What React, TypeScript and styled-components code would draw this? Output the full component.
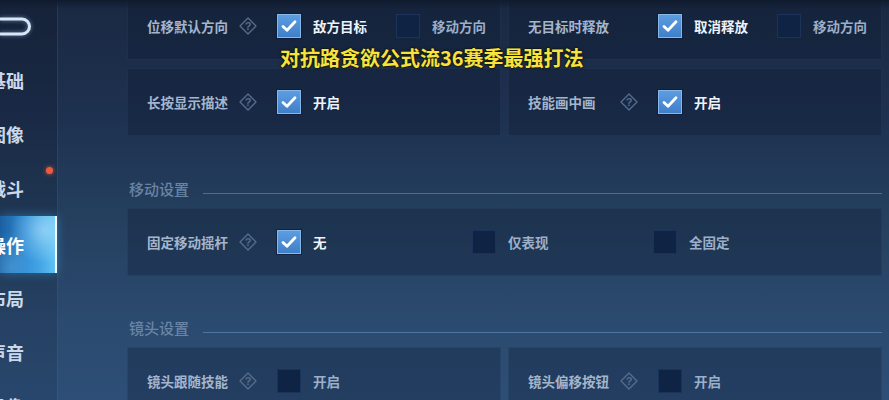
import styled, { createGlobalStyle, css } from "styled-components";

const GlobalStyle = createGlobalStyle`
     * {
          box-sizing: border-box;
     }
     body {
          margin: 0;
          background: #1b2a43;
          font-family: "Noto Sans CJK SC", "Noto Sans", sans-serif;
     }
`;

const StyledScreen = styled.div`
     position: relative;
     width: 889px;
     height: 400px;
     display: flex;
     overflow: hidden;
     background: linear-gradient(
          180deg,
          #1a2942 0%,
          #1e3150 30%,
          #25405f 55%,
          #2b4a6f 80%,
          #2d4e76 100%
     );
`;

const StyledTopShade = styled.div`
     position: absolute;
     top: 0;
     left: 0;
     right: 0;
     height: 9px;
     background: linear-gradient(180deg, #0f1b2e 0%, rgba(18, 30, 50, 0) 100%);
     pointer-events: none;
`;

const StyledSidebar = styled.nav`
     width: 58px;
     flex-shrink: 0;
     display: flex;
     flex-direction: column;
     border-right: 1px solid rgba(110, 150, 200, 0.2);
     background: linear-gradient(180deg, rgba(12, 22, 38, 0.35), rgba(20, 40, 70, 0.2));
`;

const StyledBack = styled.div`
     height: 53px;
     flex-shrink: 0;
     display: flex;
     align-items: center;
     svg {
          filter: drop-shadow(0 0 2px rgba(150, 200, 255, 0.6));
     }
`;

interface NavProps {
     active?: boolean;
}

const StyledNavItem = styled.div<NavProps>`
     position: relative;
     height: 54px;
     flex-shrink: 0;
     display: flex;
     align-items: center;
     font-size: 18px;
     font-weight: 700;
     color: #cbd8ea;
     span {
          margin-left: -12px;
     }
     ${(props) =>
          props.active &&
          css`
               margin: 1px 0 -2px;
               height: 57px;
               color: #ffffff;
               background:
                    radial-gradient(ellipse at 80% 25%, rgba(190, 235, 255, 0.55), rgba(80, 180, 240, 0) 55%),
                    radial-gradient(ellipse at 20% 90%, rgba(120, 200, 250, 0.35), rgba(80, 180, 240, 0) 50%),
                    linear-gradient(90deg, #1c5fa0 0%, #2d8cd6 50%, #5fc2f4 100%);
               border-right: 2px solid #f2f8ff;
               box-shadow: 0 0 10px rgba(60, 170, 240, 0.45);
          `}
`;

const StyledRedDot = styled.span`
     position: absolute;
     top: 6px;
     right: 4px;
     width: 7px;
     height: 7px;
     border-radius: 50%;
     background: #ee5a3c;
     box-shadow: 0 0 4px rgba(255, 90, 60, 0.8);
`;

const StyledMain = styled.main`
     flex: 1;
     padding: 0 7px 0 69px;
     overflow: hidden;
`;

const StyledScroll = styled.div`
     margin-top: -8px;
`;

const StyledCardRow = styled.div`
     display: grid;
     grid-template-columns: minmax(0, 1fr) minmax(0, 1fr);
     gap: 7px;
     & + & {
          margin-top: 8px;
     }
`;

const StyledCard = styled.div`
     min-width: 0;
     height: 68px;
     display: flex;
     align-items: center;
     padding-left: 19px;
     background: rgba(10, 22, 44, 0.28);
     border: 1px solid rgba(120, 160, 210, 0.08);
     & > * {
          flex-shrink: 0;
     }
`;

const StyledLabel = styled.span`
     width: 92px;
     font-size: 13.5px;
     font-weight: 700;
     color: #a4b5cc;
     white-space: nowrap;
`;

const StyledHelp = styled.span<{ $hidden?: boolean }>`
     width: 18px;
     height: 18px;
     margin-right: 20px;
     display: flex;
     visibility: ${(props) => (props.$hidden ? "hidden" : "visible")};
`;

const StyledOption = styled.div<{ w: number }>`
     width: ${(props) => props.w}px;
     display: flex;
     align-items: center;
     gap: 12px;
`;

const StyledBox = styled.span<{ checked?: boolean }>`
     width: 24px;
     height: 24px;
     display: flex;
     align-items: center;
     justify-content: center;
     flex-shrink: 0;
     ${(props) =>
          props.checked
               ? css`
                      background: linear-gradient(180deg, #5c9de2 0%, #3f7fc8 100%);
                      border: 1px solid #86b8ec;
                      box-shadow: 0 0 0 1px rgba(10, 25, 50, 0.6);
                 `
               : css`
                      background: #0f2445;
                      border: 1px solid rgba(30, 55, 95, 0.8);
                 `}
`;

const StyledOptionText = styled.span<{ checked?: boolean }>`
     font-size: 13.5px;
     font-weight: 700;
     white-space: nowrap;
     color: ${(props) => (props.checked ? "#eef3fa" : "#9cafc8")};
`;

const StyledSectionHeader = styled.div<{ h: number }>`
     height: ${(props) => props.h}px;
     display: flex;
     align-items: flex-end;
     padding: 0 0 9px 2px;
`;

const StyledSectionTitle = styled.span`
     font-size: 15px;
     font-weight: 500;
     color: #6a84a5;
     line-height: 20px;
`;

const StyledSectionLine = styled.span`
     flex: 1;
     height: 1px;
     margin: 0 0 5px 14px;
     background: rgba(110, 160, 210, 0.5);
`;

const StyledBanner = styled.div`
     position: absolute;
     left: 280px;
     top: 46px;
     line-height: 24px;
     font-size: 20px;
     font-weight: 700;
     color: #f6e33e;
     white-space: nowrap;
     text-shadow:
          1px 1px 0 #1b1b10,
          -1px 0 0 rgba(20, 20, 10, 0.7),
          0 -1px 0 rgba(20, 20, 10, 0.6),
          0 0 3px rgba(0, 0, 0, 0.7);
`;

const HelpIcon = () => (
     <svg width="18" height="18" viewBox="0 0 18 18">
          <path
               d="M9 1 L17 9 L9 17 L1 9 Z"
               fill="none"
               stroke="#566d8d"
               strokeWidth="1.3"
               strokeLinejoin="round"
          />
          <text
               x="9"
               y="13"
               textAnchor="middle"
               fontSize="11"
               fontWeight="700"
               fill="#566d8d"
               fontFamily="Liberation Sans, sans-serif"
          >
               ?
          </text>
     </svg>
);

const CheckMark = () => (
     <svg width="16" height="14" viewBox="0 0 16 14">
          <path
               d="M2 7.5 L6 11.2 L14 2.8"
               fill="none"
               stroke="#ffffff"
               strokeWidth="2.8"
               strokeLinecap="round"
               strokeLinejoin="round"
          />
     </svg>
);

interface OptionProps {
     text: string;
     checked?: boolean;
     w?: number;
}

const Option = ({ text, checked, w = 119 }: OptionProps) => (
     <StyledOption w={w}>
          <StyledBox checked={checked}>{checked && <CheckMark />}</StyledBox>
          <StyledOptionText checked={checked}>{text}</StyledOptionText>
     </StyledOption>
);

interface SettingProps {
     label: string;
     help?: boolean;
     options: OptionProps[];
}

const Setting = ({ label, help = true, options }: SettingProps) => (
     <StyledCard>
          <StyledLabel>{label}</StyledLabel>
          <StyledHelp $hidden={!help}>
               <HelpIcon />
          </StyledHelp>
          {options.map((o) => (
               <Option key={o.text} {...o} />
          ))}
     </StyledCard>
);

const navItems = ["基础", "图像", "战斗", "操作", "布局", "声音", "录像"];

export default function App() {
     return (
          <>
               <GlobalStyle />
               <StyledScreen>
                    <StyledSidebar>
                         <StyledBack>
                              <svg width="34" height="22" viewBox="0 0 34 22">
                                   <path
                                        d="M0 3 H22 A7.5 7.5 0 0 1 22 18 H0"
                                        fill="none"
                                        stroke="#dbe6f4"
                                        strokeWidth="3"
                                        strokeLinecap="round"
                                   />
                              </svg>
                         </StyledBack>
                         {navItems.map((item) => (
                              <StyledNavItem key={item} active={item === "操作"}>
                                   <span>{item}</span>
                                   {item === "战斗" && <StyledRedDot />}
                              </StyledNavItem>
                         ))}
                    </StyledSidebar>

                    <StyledMain>
                         <StyledScroll>
                              <StyledCardRow>
                                   <Setting
                                        label="位移默认方向"
                                        options={[
                                             { text: "敌方目标", checked: true },
                                             { text: "移动方向" },
                                        ]}
                                   />
                                   <Setting
                                        label="无目标时释放"
                                        help={false}
                                        options={[
                                             { text: "取消释放", checked: true },
                                             { text: "移动方向" },
                                        ]}
                                   />
                              </StyledCardRow>
                              <StyledCardRow>
                                   <Setting
                                        label="长按显示描述"
                                        options={[{ text: "开启", checked: true }]}
                                   />
                                   <Setting
                                        label="技能画中画"
                                        options={[{ text: "开启", checked: true }]}
                                   />
                              </StyledCardRow>

                              <StyledSectionHeader h={72}>
                                   <StyledSectionTitle>移动设置</StyledSectionTitle>
                                   <StyledSectionLine />
                              </StyledSectionHeader>
                              <Setting
                                   label="固定移动摇杆"
                                   options={[
                                        { text: "无", checked: true, w: 195 },
                                        { text: "仅表现", w: 181 },
                                        { text: "全固定", w: 120 },
                                   ]}
                              />

                              <StyledSectionHeader h={71}>
                                   <StyledSectionTitle>镜头设置</StyledSectionTitle>
                                   <StyledSectionLine />
                              </StyledSectionHeader>
                              <StyledCardRow>
                                   <Setting
                                        label="镜头跟随技能"
                                        options={[{ text: "开启" }]}
                                   />
                                   <Setting
                                        label="镜头偏移按钮"
                                        options={[{ text: "开启" }]}
                                   />
                              </StyledCardRow>
                         </StyledScroll>
                    </StyledMain>

                    <StyledTopShade />
                    <StyledBanner>对抗路贪欲公式流36赛季最强打法</StyledBanner>
               </StyledScreen>
          </>
     );
}
